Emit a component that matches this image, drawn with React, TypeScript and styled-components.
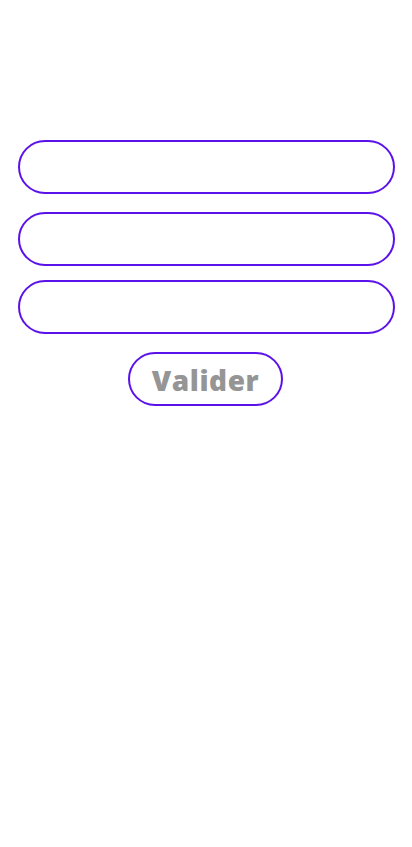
import React from "react";
import styled, { createGlobalStyle } from "styled-components";

const Global = createGlobalStyle`
  html, body { margin: 0; padding: 0; background: #ffffff; }
  body { font-family: "Open Sans", "Noto Sans", sans-serif; }
`;

const Page = styled.div`
  width: 412px;
  min-height: 847px;
  box-sizing: border-box;
  padding: 140px 17px 0 18px;
  display: flex;
  flex-direction: column;
  align-items: center;
`;

const Form = styled.form`
  width: 100%;
  display: flex;
  flex-direction: column;
  align-items: center;
  margin: 0;
`;

const Input = styled.input<{ $gap: number }>`
  width: 100%;
  height: 54px;
  box-sizing: border-box;
  border: 2px solid #5b12e9;
  border-radius: 27px;
  background: #ffffff;
  outline: none;
  padding: 0 20px;
  font-family: "Open Sans", sans-serif;
  font-size: 18px;
  margin-bottom: ${(p) => p.$gap}px;
`;

const Button = styled.button`
  width: 155px;
  height: 54px;
  margin-right: 2px;
  box-sizing: border-box;
  border: 2px solid #5b12e9;
  border-radius: 27px;
  background: #ffffff;
  color: #959595;
  font-family: "Open Sans", sans-serif;
  font-weight: 800;
  font-size: 28px;
  letter-spacing: 0.6px;
  padding: 2px 0 0;
  display: flex;
  align-items: center;
  justify-content: center;
  cursor: pointer;
`;

export default function App() {
  return (
    <>
      <Global />
      <Page>
        <Form onSubmit={(e) => e.preventDefault()}>
          <Input $gap={18} type="text" />
          <Input $gap={14} type="text" />
          <Input $gap={18} type="password" />
          <Button type="submit">Valider</Button>
        </Form>
      </Page>
    </>
  );
}
